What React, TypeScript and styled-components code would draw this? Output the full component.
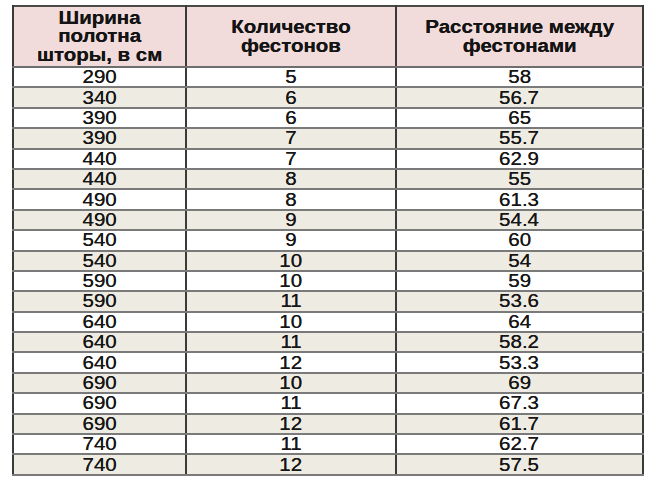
import { FC } from 'react';
import styled, { createGlobalStyle } from 'styled-components';

const rows: [number, number, string][] = [
  [290, 5, '58'],
  [340, 6, '56.7'],
  [390, 6, '65'],
  [390, 7, '55.7'],
  [440, 7, '62.9'],
  [440, 8, '55'],
  [490, 8, '61.3'],
  [490, 9, '54.4'],
  [540, 9, '60'],
  [540, 10, '54'],
  [590, 10, '59'],
  [590, 11, '53.6'],
  [640, 10, '64'],
  [640, 11, '58.2'],
  [640, 12, '53.3'],
  [690, 10, '69'],
  [690, 11, '67.3'],
  [690, 12, '61.7'],
  [740, 11, '62.7'],
  [740, 12, '57.5'],
];

const GlobalStyle = createGlobalStyle`
  html, body {
    margin: 0;
    padding: 0;
    background: #ffffff;
  }
  body {
    font-family: "Liberation Sans", Arial, sans-serif;
    color: #161616;
  }
`;

const App: FC = () => {
  return (
    <Page>
      <GlobalStyle />
      <Table>
        <colgroup>
          <col style={{ width: 173 }} />
          <col style={{ width: 210 }} />
          <col style={{ width: 247 }} />
        </colgroup>
        <thead>
          <tr>
            <Th>
              <Wide>
                Ширина
                <br />
                полотна
                <br />
                шторы, в см
              </Wide>
            </Th>
            <Th>
              <Wide>
                Количество
                <br />
                фестонов
              </Wide>
            </Th>
            <Th>
              <Wide>
                Расстояние между
                <br />
                фестонами
              </Wide>
            </Th>
          </tr>
        </thead>
        <tbody>
          {rows.map(([width, count, gap], i) => (
            <Row key={i} $alt={i % 2 === 1}>
              <Td>
                <Wide>{width}</Wide>
              </Td>
              <Td>
                <Wide>{count}</Wide>
              </Td>
              <Td>
                <Wide>{gap}</Wide>
              </Td>
            </Row>
          ))}
        </tbody>
      </Table>
    </Page>
  );
};

export default App;

const Page = styled.div`
  width: 650px;
  height: 483px;
  padding: 5px 0 0 12px;
  box-sizing: border-box;
  background: #ffffff;
`;

const Table = styled.table`
  width: 630px;
  border-collapse: collapse;
  table-layout: fixed;
  border: 2px solid #4a4a4a;
`;

const Wide = styled.span`
  display: inline-block;
  transform: scaleX(1.17);
  transform-origin: center;
  text-shadow: 0 0 0.4px #161616;
`;

const Th = styled.th`
  height: 59px;
  padding: 0;
  background: #f2dcdb;
  font-size: 17.5px;
  font-weight: bold;
  line-height: 18.5px;
  text-align: center;
  vertical-align: middle;
  color: #141414;
  border-left: 2px solid #3a3a3a;
  border-right: 2px solid #3a3a3a;
  border-bottom: 2px solid #6e6e6e;
`;

const Row = styled.tr<{ $alt: boolean }>`
  background: ${({ $alt }) => ($alt ? '#eeece2' : '#ffffff')};
`;

const Td = styled.td`
  height: 18.4px;
  padding: 0;
  font-size: 17.5px;
  line-height: 18px;
  text-align: center;
  vertical-align: middle;
  border-left: 2px solid #3a3a3a;
  border-right: 2px solid #3a3a3a;
  border-bottom: 2px solid #7a7a7a;
`;
